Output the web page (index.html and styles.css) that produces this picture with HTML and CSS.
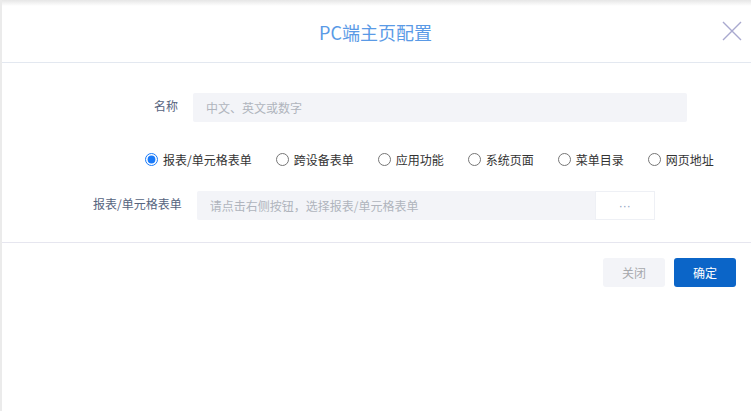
FILE: index.html
```html
<!DOCTYPE html>
<html lang="zh-CN">
<head>
<meta charset="UTF-8">
<meta name="viewport" content="width=device-width, initial-scale=1.0">
<title>PC端主页配置</title>
<link rel="stylesheet" href="styles.css">
</head>
<body>
<div class="dialog">
    <!-- Header -->
    <div class="dialog-header">
        <h2 class="dialog-title">PC端主页配置</h2>
        <span class="close-btn">
            <svg width="20" height="20" viewBox="0 0 20 20">
                <path d="M1 1 L19 19 M19 1 L1 19" stroke="#a9a9cf" stroke-width="1.4" fill="none"/>
            </svg>
        </span>
    </div>

    <!-- Form -->
    <div class="dialog-body">
        <div class="row row-name">
            <label class="row-label">名称</label>
            <input type="text" class="field field-name" placeholder="中文、英文或数字">
        </div>

        <div class="radio-row">
            <label class="radio"><input type="radio" name="kind" checked><span>报表/单元格表单</span></label>
            <label class="radio"><input type="radio" name="kind"><span>跨设备表单</span></label>
            <label class="radio"><input type="radio" name="kind"><span>应用功能</span></label>
            <label class="radio"><input type="radio" name="kind"><span>系统页面</span></label>
            <label class="radio"><input type="radio" name="kind"><span>菜单目录</span></label>
            <label class="radio"><input type="radio" name="kind"><span>网页地址</span></label>
        </div>

        <div class="row row-report">
            <label class="row-label">报表/单元格表单</label>
            <input type="text" class="field field-report" placeholder="请点击右侧按钮，选择报表/单元格表单" readonly>
            <button class="pick-btn">···</button>
        </div>
    </div>

    <!-- Footer -->
    <div class="dialog-footer">
        <button class="btn btn-cancel">关闭</button>
        <button class="btn btn-ok">确定</button>
    </div>
</div>
</body>
</html>
```
FILE: styles.css
```css
body {
    margin: 0;
    padding: 0;
    font-family: "Noto Sans CJK SC", "Noto Sans", sans-serif;
    font-size: 12px;
    background-color: #fff;
    color: #333;
}
.dialog {
    height: 411px;
    box-sizing: border-box;
    border-left: 2px solid #ebebeb;
    background-color: #fff;
}
.dialog-header {
    position: relative;
    height: 62px;
    border-bottom: 1px solid #e3e8f0;
    background: linear-gradient(#e6e6e6, #fff 6px);
}
.dialog-title {
    margin: 0;
    text-align: center;
    line-height: 64px;
    font-size: 18px;
    font-weight: normal;
    color: #5a9ae6;
    padding-right: 2px;
}
.close-btn {
    position: absolute;
    top: 21px;
    right: 9px;
    width: 20px;
    height: 20px;
}
.dialog-body {
    padding: 30px 0 22px;
    border-bottom: 1px solid #e6e6ef;
}
.row {
    display: flex;
    align-items: center;
}
.row-label {
    color: #56647e;
    white-space: nowrap;
}
.row-name .row-label {
    width: 98px;
    margin-left: 78px;
    margin-right: 15px;
    text-align: right;
    position: relative;
    top: -2px;
}
.row-report .row-label {
    margin-left: 91px;
    margin-right: 15px;
    position: relative;
    top: -2px;
}
.field {
    height: 29px;
    box-sizing: border-box;
    border: none;
    border-radius: 2px;
    background-color: #f3f4f8;
    padding: 0 13px;
    font-family: inherit;
    font-size: 12px;
    color: #333;
    outline: none;
}
.field::placeholder {
    color: #b0b4bd;
}
.field-name {
    width: 494px;
}
.field-report {
    width: 398px;
    border-radius: 2px 0 0 2px;
}
.pick-btn {
    width: 60px;
    height: 29px;
    box-sizing: border-box;
    border: 1px solid #eef0f5;
    background-color: #fff;
    color: #8f9fbf;
    font-size: 12px;
    cursor: pointer;
    padding: 0;
}
.radio-row {
    display: flex;
    align-items: center;
    margin: 27px 0 22px 143px;
    height: 20px;
}
.radio {
    display: flex;
    align-items: center;
    margin-right: 24px;
    color: #333;
    white-space: nowrap;
}
.radio input {
    width: 13px;
    height: 13px;
    margin: 0 5px 0 0;
    accent-color: #1a7af8;
}
.dialog-footer {
    display: flex;
    justify-content: flex-end;
    gap: 9px;
    padding: 15px 15px 0 0;
}
.btn {
    width: 62px;
    height: 29px;
    border: none;
    border-radius: 3px;
    font-family: inherit;
    font-size: 12px;
    cursor: pointer;
}
.btn-cancel {
    background-color: #f3f4f8;
    color: #a7a9ad;
}
.btn-ok {
    background-color: #0b65c8;
    color: #fff;
}
```
